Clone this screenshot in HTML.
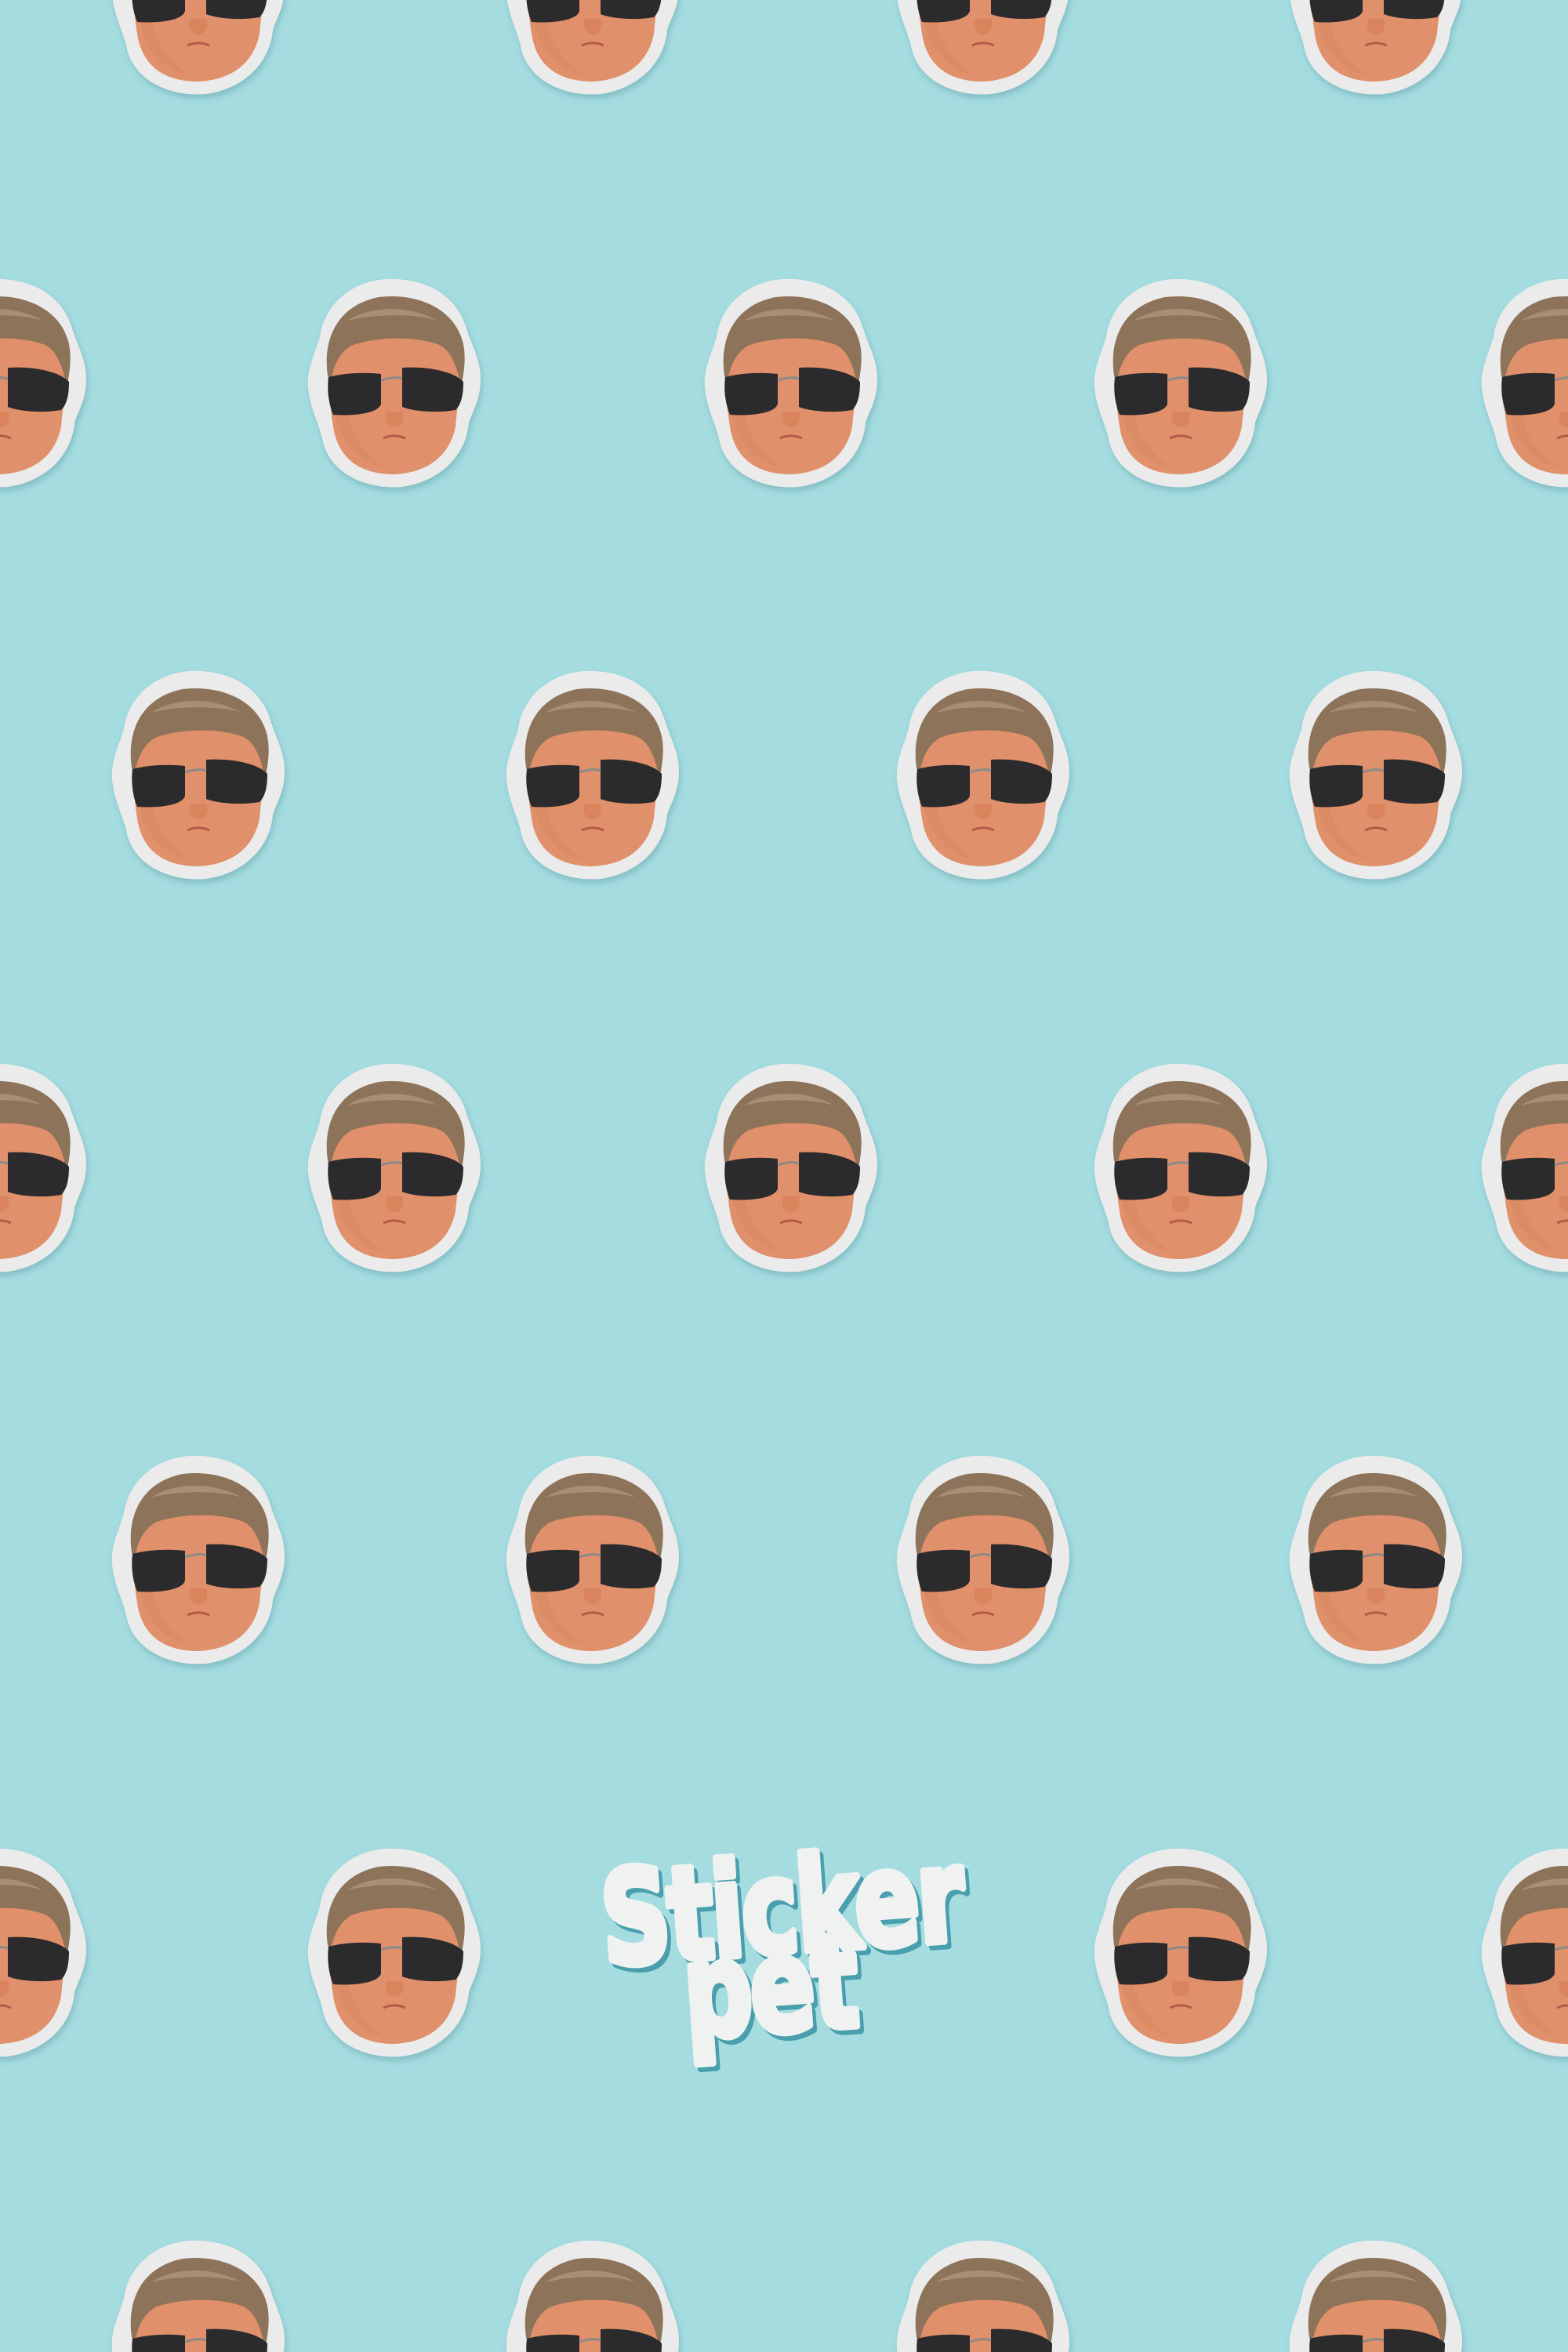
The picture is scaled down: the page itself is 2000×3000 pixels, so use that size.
<!DOCTYPE html>
<html><head><meta charset="utf-8"><style>
html,body{margin:0;padding:0;background:#a4dce0;}
svg{display:block}
</style></head><body>
<svg width="2000" height="3000" viewBox="0 0 2000 3000" xmlns="http://www.w3.org/2000/svg">
<defs>
<filter id="sh" x="-20%" y="-20%" width="140%" height="140%"><feDropShadow dx="2" dy="5" stdDeviation="4" flood-color="#5a9aa0" flood-opacity="0.45"/></filter>
<g id="f">
  <path filter="url(#sh)" fill="#ebebeb" d="M-10,-133 C40,-135 80,-112 92,-70 C100,-45 110,-30 110,-5 C110,20 100,35 95,50 C92,90 60,125 10,132 C-40,136 -85,112 -92,70 C-97,50 -108,30 -110,5 C-112,-20 -100,-40 -95,-60 C-88,-105 -50,-131 -10,-133Z"/>
  <path fill="#e0906a" d="M-80,-40 C-82,-70 -40,-85 0,-85 C45,-85 82,-70 82,-30 C85,10 80,30 78,55 C70,95 40,114 0,116 C-45,116 -72,95 -78,55 C-82,30 -85,0 -80,-40Z"/>
  <path fill="#d98a62" d="M-78,20 C-75,60 -55,100 -10,108 C-40,90 -60,60 -62,20Z" opacity=".6"/>
  <path fill="#8d7359" d="M-85,-10 C-92,-60 -70,-100 -20,-110 C30,-116 78,-95 88,-50 C92,-30 88,-10 85,5 C80,-25 70,-45 55,-50 C20,-62 -30,-58 -55,-48 C-72,-38 -78,-20 -82,0Z"/>
  <path fill="#b59a7c" d="M-60,-80 C-30,-100 20,-100 55,-80 C30,-88 -20,-90 -60,-80Z" opacity=".7"/>
  <path fill="#2b2a2c" d="M-84,-8 C-60,-14 -35,-14 -17,-12 L-17,26 C-20,38 -50,42 -78,40 C-84,26 -86,8 -84,-8Z"/>
  <path fill="#2b2a2c" d="M10,-20 C40,-22 75,-16 88,-2 C88,18 84,28 78,34 C55,38 25,36 10,30 Z"/>
  <path fill="none" stroke="#8a8a88" stroke-width="3" d="M-17,-4 C-5,-8 5,-8 10,-6"/>
  <path fill="#d57f58" d="M-10,36 C-14,48 -8,56 0,56 C8,56 14,48 10,36Z" opacity=".7"/>
  <path fill="none" stroke="#b35a48" stroke-width="3" d="M-14,70 C-5,66 5,66 14,70"/>
</g>
</defs>
<rect width="2000" height="3000" fill="#a4dce0"/>
<use href="#f" x="253" y="-12"/><use href="#f" x="756" y="-12"/><use href="#f" x="1254" y="-12"/><use href="#f" x="1755" y="-12"/>
<use href="#f" x="0" y="489"/><use href="#f" x="503" y="489"/><use href="#f" x="1009" y="489"/><use href="#f" x="1506" y="489"/><use href="#f" x="2000" y="489"/>
<use href="#f" x="253" y="989"/><use href="#f" x="756" y="989"/><use href="#f" x="1254" y="989"/><use href="#f" x="1755" y="989"/>
<use href="#f" x="0" y="1490"/><use href="#f" x="503" y="1490"/><use href="#f" x="1009" y="1490"/><use href="#f" x="1506" y="1490"/><use href="#f" x="2000" y="1490"/>
<use href="#f" x="253" y="1990"/><use href="#f" x="756" y="1990"/><use href="#f" x="1254" y="1990"/><use href="#f" x="1755" y="1990"/>
<use href="#f" x="0" y="2491"/><use href="#f" x="503" y="2491"/><use href="#f" x="1506" y="2491"/><use href="#f" x="2000" y="2491"/>
<use href="#f" x="253" y="2991"/><use href="#f" x="756" y="2991"/><use href="#f" x="1254" y="2991"/><use href="#f" x="1755" y="2991"/>
<g font-family="'DejaVu Sans', 'Liberation Sans', sans-serif" font-weight="bold" stroke-linejoin="round" font-size="165" letter-spacing="-4">
  <g transform="translate(998,2450) rotate(-4) scale(0.74,1)">
    <g transform="translate(6,6)" fill="#4a9fae" stroke="#4a9fae" stroke-width="10">
      <text x="0" y="40" text-anchor="middle">Sticker</text>
      <text x="-30" y="140" text-anchor="middle">pet</text>
    </g>
    <g fill="#f0f2f1" stroke="#f0f2f1" stroke-width="10">
      <text x="0" y="40" text-anchor="middle">Sticker</text>
      <text x="-30" y="140" text-anchor="middle">pet</text>
    </g>
  </g>
</g>
</svg>
</body></html>
